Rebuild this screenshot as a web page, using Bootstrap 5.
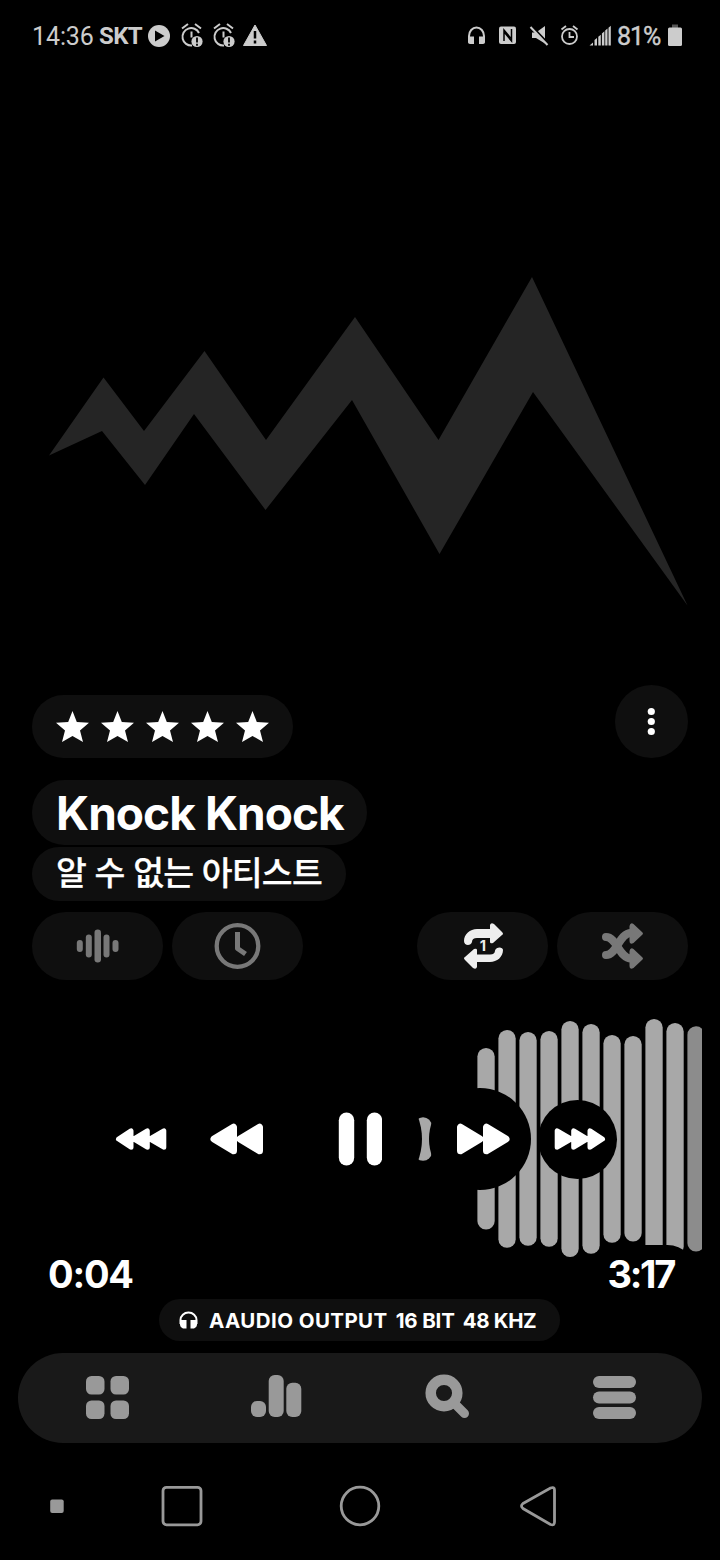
<!DOCTYPE html>
<html lang="ko">
<head>
<meta charset="utf-8">
<meta name="viewport" content="width=device-width, initial-scale=1">
<title>Knock Knock</title>
<link rel="stylesheet" href="https://cdn.jsdelivr.net/npm/bootstrap@5.3.0/dist/css/bootstrap.min.css">
<style>
  body { background: #000; color: #fff; font-family: Inter, "Noto Sans CJK KR", sans-serif; }
  svg { display: block; flex: none; }
  .phone { width: 720px; height: 1560px; }
  .statusbar { height: 72px; padding: 0 37px 0 32px; color: #ccc; font-family: Roboto, sans-serif; font-size: 25px; line-height: 73px; }
  .clock { width: 62px; letter-spacing: -.1px; }
  .carrier { font-weight: 700; font-size: 24px; margin-left: 5px; width: 46px; letter-spacing: -.6px; }
  .battery { width: 43px; letter-spacing: -1px; -webkit-text-stroke: .4px #ccc; }
  .artwork { height: 613px; }
  .pill { background: #0f0f0f; border: 0; color: #787878; padding: 0; }
  .rating { width: 261px; height: 63px; border-radius: 32px; padding: 0 0 2px 18px; }
  .more { width: 73px; height: 73px; padding-right: 1px; }
  .track { width: 335px; height: 65px; border-radius: 33px; padding-left: 24px; margin: 22px 0 2px; font-size: 46px; font-weight: 700; line-height: 66px; letter-spacing: -.95px; color: #fff; white-space: nowrap; }
  .artist { width: 314px; height: 54px; border-radius: 27px; padding-left: 24px; margin-bottom: 11px; font: 500 33.5px/47px "Noto Sans CJK KR", sans-serif; letter-spacing: -.8px; -webkit-text-stroke: .25px #fff; color: #fff; white-space: nowrap; }
  .mode { width: 131px; height: 68px; border-radius: 34px; }
  .modes { gap: 9px; }
  .player { height: 319px; }
  .wave { position: absolute; top: 0; left: 0; }
  .controls { height: 318px; gap: 7.25px; padding-right: 1px; }
  .ctl { background: #000; border: 0; padding: 0; color: #fff; border-radius: 50%; flex: none; display: flex; align-items: center; justify-content: center; }
  .ctl-s { width: 79px; height: 79px; } .ctl-m { width: 102px; height: 102px; } .ctl-l { width: 124px; height: 124px; }
  .to-left { padding-right: 4px; } .to-right { padding-left: 7px; }
  .ctl-s.to-left { padding-right: 2px; } .ctl-s.to-right { padding-left: 4px; }
  .times { position: absolute; left: 24px; right: 24px; bottom: -3px; height: 57px; font-size: 38px; font-weight: 700; line-height: 59px; }
  .times span { background: #000; border-radius: 29px; padding: 0 21px 0 24px; }
  .elapsed { letter-spacing: -1.2px; }
  .times .total { letter-spacing: -2.3px; padding: 0 22px 0 12px; }
  .output { width: 401px; height: 42px; border-radius: 21px; padding-left: 20px; margin: 0 auto 12px 159px; font-size: 20.5px; font-weight: 700; color: #fff; white-space: nowrap; position: relative; }
  .format { gap: 8px; padding: 2px 0 0 11px; }
  .format span:nth-child(1) { letter-spacing: .42px; } .format span:nth-child(2) { letter-spacing: -.15px; } .format span:nth-child(3) { letter-spacing: -.35px; }
  .tabs { width: 684px; height: 90px; border-radius: 45px; background: #191919; margin: 0 18px; color: #999; }
  .sysnav { height: 125px; padding: 0 163px 0 50px; color: #999; }
</style>
</head>
<body>
<main class="phone overflow-hidden">
  <header class="statusbar d-flex justify-content-between align-items-center">
    <div class="d-flex align-items-center"><span class="clock">14:36</span><span class="carrier">SKT</span>
      <svg width="130" height="30" viewBox="145 20.500 130 30">
        <circle cx="159" cy="35.500" r="11" fill="#ccc"/><path d="M155 30v11l9.500-5.500z" fill="#000"/>
        <g id="alarmAlert"><g fill="none" stroke="#ccc" stroke-width="2"><path d="M199 32.500A8.700 8.700 0 1 0 192 45M182 28l6-4.500M195 23.500l6 4.500"/><path d="M191.500 31v6"/></g><circle cx="197" cy="41" r="5.600" fill="#ccc"/><path d="M197 37v5M197 43.200v2" stroke="#000" stroke-width="1.800"/></g>
        <use href="#alarmAlert" x="32"/>
        <path d="M255 24.500 266.500 45h-23z" fill="#ccc" stroke="#ccc" stroke-linejoin="round"/><path d="M255 30.500v7.500M255 40v3" stroke="#000" stroke-width="2.500"/>
      </svg>
    </div>
    <div class="d-flex align-items-center">
      <svg width="152" height="30" viewBox="465 20.500 152 30">
        <path d="M469 42v-6.500a7.500 8.500 0 0 1 15 0V42" fill="none" stroke="#ccc" stroke-width="2"/><path d="M468 36h6v7.500h-4q-2 0-2-2zM479 36h6v5.500q0 2-2 2h-4z" fill="#ccc"/>
        <rect x="499" y="26" width="17" height="17.500" rx="2" fill="#ccc"/><path d="M504 40.500V29.500l7 8.500M511.500 28.500v12l-7-8.500" fill="none" stroke="#000" stroke-width="1.500"/>
        <path d="M532 32h4l9-6.500V43l-9-5.500h-4z" fill="#ccc"/><path d="M532 26.500 549 44.500" stroke="#000" stroke-width="3"/><path d="M530.500 26.500 547.500 44.500" stroke="#ccc" stroke-width="2"/>
        <g fill="none" stroke="#ccc" stroke-width="1.800"><circle cx="569.500" cy="36" r="7.500"/><path d="M569.500 31.500v5h4.500M561.500 29l4.500-3.500M573 25.500l4.500 3.500"/></g>
        <path d="M589.500 45l3.500-3V45zM594.500 39.500l2.500-2V45h-2.500zM598.300 36.300l2.500-2V45h-2.500zM601.900 33l2.500-2.200V45h-2.500zM605.200 30l2.300-2V45h-2.300zM608.500 27.200l2.300-2V45h-2.300z" fill="#ccc"/>
      </svg>
      <span class="battery">81%</span>
      <svg width="23" height="30" viewBox="660 20.500 23 30"><path d="M672 24h6v4h-6z" fill="#555"/><rect x="668" y="27" width="14" height="18.500" rx="1.500" fill="#ccc"/></svg>
    </div>
  </header>

  <section class="artwork"><svg width="720" height="613" viewBox="0 72 720 613"><path fill="#252525" d="M49 455.500 103.500 377.500 144 431 204.500 351 266 440 355 317 438.500 440 532 277 687.500 605.500 533 392 439.500 554 352 400 265.500 510 194 414 145 485 102 431z"/></svg></section>

  <section class="info px-4 mx-2">
    <div class="d-flex justify-content-between align-items-end">
      <div class="pill rating d-flex align-items-center">
        <svg width="226" height="40" viewBox="50 706 226 40" fill="#fff"><path id="star" d="M72.500 711 76.800 722 89 722.800 80 730.500 83 742 72.500 735.900 62 742 65 730.500 56 722.800 68.200 722z"/><use href="#star" x="45"/><use href="#star" x="90"/><use href="#star" x="135"/><use href="#star" x="180"/></svg>
      </div>
      <button class="pill more rounded-circle d-flex align-items-center justify-content-center" aria-label="More"><svg width="10" height="30" viewBox="0 0 10 30" fill="#fff"><circle cx="5.300" cy="4.500" r="3.600"/><circle cx="5.300" cy="14.500" r="3.600"/><circle cx="5.300" cy="24.500" r="3.600"/></svg></button>
    </div>
    <div class="pill track"><span class="title">Knock Knock</span></div>
    <div class="pill artist">알 수 없는 아티스트</div>
    <div class="d-flex justify-content-between">
      <div class="modes d-flex">
        <button class="pill mode d-flex align-items-center justify-content-center" aria-label="Visualizer"><svg width="44" height="36" viewBox="0.500 0 44 36" fill="currentColor"><rect x="1.300" y="12" width="6" height="12" rx="3"/><rect x="10.300" y="6.500" width="6" height="23" rx="3"/><rect x="19" y="1.500" width="6.500" height="33" rx="3.200"/><rect x="28" y="6.500" width="6" height="23" rx="3"/><rect x="37" y="12" width="6" height="12" rx="3"/></svg></button>
        <button class="pill mode d-flex align-items-center justify-content-center" aria-label="Sleep timer"><svg width="48" height="48" viewBox="0.500 0 48 48" fill="none" stroke="currentColor"><circle cx="24" cy="24" r="20.800" stroke-width="4.300"/><path d="M24 10v16.500l8 5.500" stroke-width="5" stroke-linejoin="round"/></svg></button>
      </div>
      <div class="modes d-flex">
        <button class="pill mode d-flex align-items-center justify-content-center" aria-label="Repeat one"><svg width="44" height="50" viewBox="461 921 44 50"><g fill="#eee"><path d="M464 941c0-7 6-12 13-12h13v-4q1-3 4-1l8 8q2 2 0 3l-9 8q-3 1-3-1v-4h-13q-5 0-5 4c-1 4-8 4-8-1z"/><path d="M503 950c0 7-6 12-13 12h-13v5q-1 3-4 1l-8-8q-2-2 0-3l9-8q3-1 3 1v4.500h13q5 0 5-4c1-4 8-4 8-.5z"/></g><text x="483" y="951" text-anchor="middle" font-family="Inter" font-weight="700" font-size="14.500" fill="#eee">1</text></svg></button>
        <button class="pill mode d-flex align-items-center justify-content-center" aria-label="Shuffle"><svg width="44" height="50" viewBox="601 921 44 50"><g fill="none" stroke="currentColor" stroke-width="8" stroke-linecap="round"><path d="M606 937c11 0 13 21.500 25 21.500"/><path d="M606 955c11 0 13-22 25-22"/></g><path d="M629.500 926q1-4 4-2l9 8.500q1 1 0 2l-9 8.500q-4 2-4-2zM629.500 951q1-4 4-2l9 8.500q1 1 0 2l-9 8.500q-4 2-4-2z" fill="currentColor"/></svg></button>
      </div>
    </div>
  </section>

  <section class="player position-relative">
    <svg class="wave" width="702" height="319" viewBox="0 980 702 319" fill="#a8a8a8">
      <rect x="414.400" y="1117.300" width="17.300" height="43.500" rx="8.600"/>
      <rect x="477.400" y="1048" width="17.300" height="181.600" rx="8.600"/>
      <rect x="498.400" y="1030" width="17.300" height="217.800" rx="8.600"/>
      <rect x="519.400" y="1032" width="17.300" height="213.800" rx="8.600"/>
      <rect x="540.400" y="1031" width="17.300" height="215.800" rx="8.600"/>
      <rect x="561.400" y="1021" width="17.300" height="236" rx="8.600"/>
      <rect x="582.400" y="1024" width="17.300" height="229.800" rx="8.600"/>
      <rect x="603.400" y="1035" width="17.300" height="207.800" rx="8.600"/>
      <rect x="624.400" y="1036" width="17.300" height="205.600" rx="8.600"/>
      <rect x="645.400" y="1019" width="17.300" height="240" rx="8.600"/>
      <rect x="666.400" y="1023" width="17.300" height="232" rx="8.600"/>
      <rect x="687.400" y="1026.300" width="17.300" height="225.200" rx="8.600" fill="#8c8c8c"/>
    </svg>
    <div class="controls position-relative d-flex align-items-center justify-content-center">
      <button class="ctl ctl-s to-left" aria-label="Previous category"><svg width="52" height="24" viewBox="0 0 52 24" fill="#fff" stroke="#fff" stroke-width="5" stroke-linejoin="round"><path d="M3.500 12 16 3.800v16.400zM19 12l13.300-8.200v16.400zM35 12l13.800-8.200v16.400z"/></svg></button>
      <button class="ctl ctl-m to-left" aria-label="Previous"><svg width="60" height="32" viewBox="0 0 60 32" fill="#fff" stroke="#fff" stroke-width="7" stroke-linejoin="round"><path d="M7 16 26.500 4.300v23.400zM33 16 52.500 4.300v23.400z"/></svg></button>
      <button class="ctl ctl-l" aria-label="Pause"><svg width="44" height="54" viewBox="-.5 0 44 54" fill="#fff"><rect x=".3" y=".5" width="15.400" height="53" rx="7.700"/><rect x="28.300" y=".5" width="15.400" height="53" rx="7.700"/></svg></button>
      <button class="ctl ctl-m to-right" aria-label="Next"><svg width="60" height="32" viewBox="0 0 60 32" fill="#fff" stroke="#fff" stroke-width="7" stroke-linejoin="round"><path d="M53 16 33.500 4.300v23.400zM27 16 7.500 4.300v23.400z"/></svg></button>
      <button class="ctl ctl-s to-right" aria-label="Next category"><svg width="52" height="24" viewBox="0 0 52 24" fill="#fff" stroke="#fff" stroke-width="5" stroke-linejoin="round"><path d="M48.500 12 36 3.800v16.400zM33 12 19.700 3.800v16.400zM17 12 3.200 3.800v16.400z"/></svg></button>
    </div>
    <div class="times d-flex justify-content-between"><span class="elapsed">0:04</span><span class="total">3:17</span></div>
  </section>

  <div class="pill output d-flex align-items-center">
    <svg width="19" height="18" viewBox="0 0 19 18"><path d="M1.500 13V9a8 7.500 0 0 1 16 0v4" fill="none" stroke="#fff" stroke-width="2"/><path d="M1 9h6.500v8.500H4Q.5 16 1 12zM11.500 9H18v3q.5 4-3 5.500h-3.500z" fill="#fff"/></svg>
    <div class="format d-flex"><span>AAUDIO OUTPUT</span><span>16 BIT</span><span>48 KHZ</span></div>
  </div>

  <nav class="tabs">
    <svg width="684" height="90" viewBox="18 1353 684 90" fill="currentColor">
      <rect x="86" y="1376" width="18.500" height="18.500" rx="5.500"/><rect x="110.500" y="1376" width="18.500" height="18.500" rx="5.500"/><rect x="86" y="1400.500" width="18.500" height="18.500" rx="5.500"/><rect x="110.500" y="1400.500" width="18.500" height="18.500" rx="5.500"/>
      <rect x="251" y="1401" width="15" height="16" rx="6"/><rect x="268.700" y="1375" width="15" height="42" rx="6"/><rect x="286.300" y="1382.700" width="15" height="34.300" rx="6"/>
      <circle cx="444" cy="1393" r="13.300" fill="none" stroke="currentColor" stroke-width="10.500"/><path d="M453 1402l11.500 11.500" stroke="currentColor" stroke-width="9" stroke-linecap="round"/>
      <rect x="593" y="1376" width="43" height="12" rx="6"/><rect x="593" y="1391.500" width="43" height="12" rx="6"/><rect x="593" y="1407" width="43" height="12" rx="6"/>
    </svg>
  </nav>

  <footer class="sysnav d-flex align-items-center">
    <svg width="510" height="50" viewBox="50 1481 510 50" fill="none" stroke="#999" stroke-width="2.800">
      <rect x="50.200" y="1499.500" width="13.500" height="13.500" rx="2" fill="#999" stroke="none"/>
      <rect x="163" y="1487.300" width="38" height="37.500" rx="3.500"/>
      <circle cx="360" cy="1506" r="18.800"/>
      <path d="M523 1503.500 550.500 1488q4-1.500 4 2v32q0 4-4 2.500L523 1508.500q-3-2.500 0-5z"/>
    </svg>
  </footer>
</main>
<script src="https://cdn.jsdelivr.net/npm/bootstrap@5.3.0/dist/js/bootstrap.bundle.min.js"></script>
</body>
</html>
